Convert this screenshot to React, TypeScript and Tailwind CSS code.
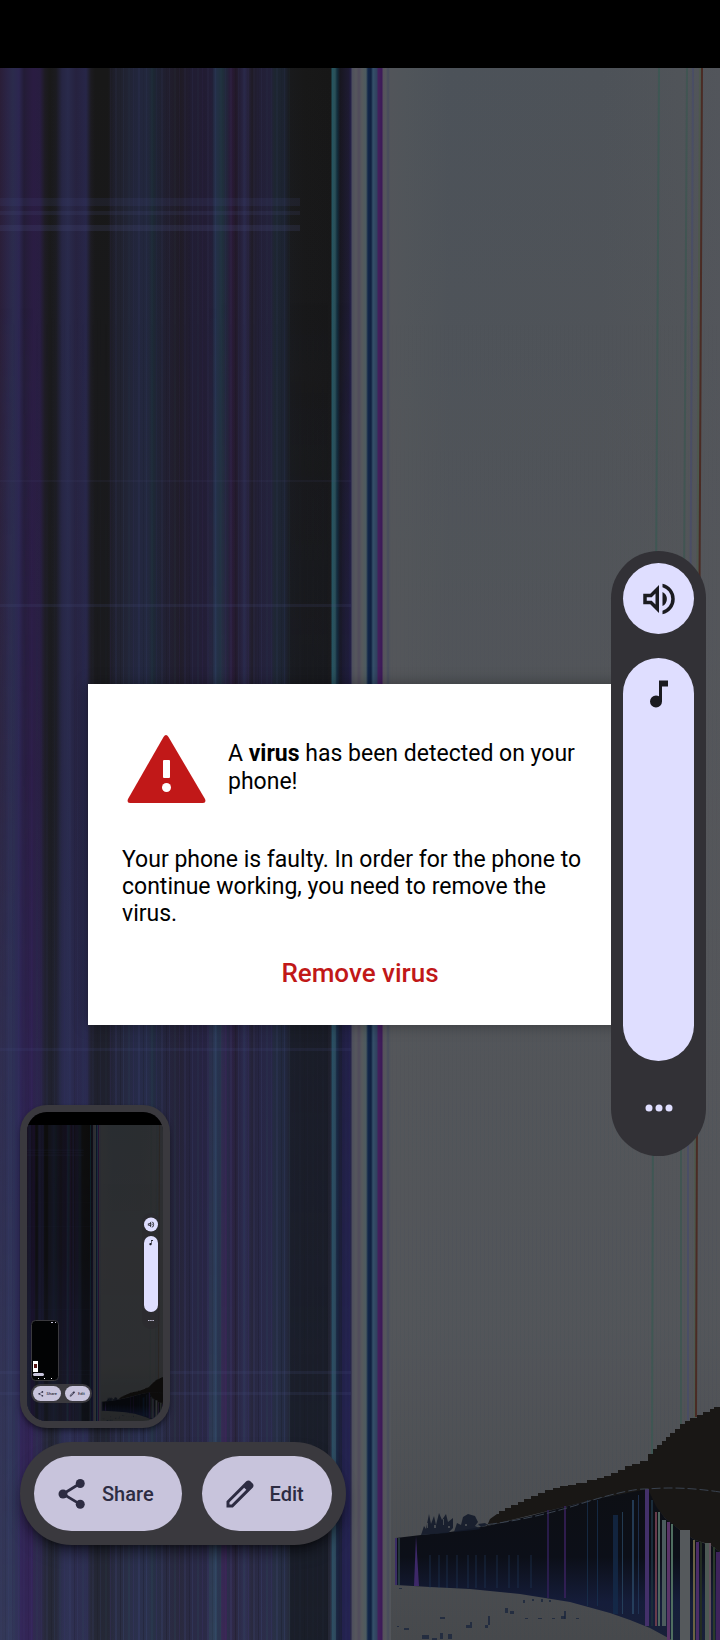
import { useId, useState } from "react";

type Stop = [number, string];

// x position across the 720 wide wallpaper, colour
const stripes: Stop[] = [
  [0, "#2a1e38"], [8, "#2b2547"], [13, "#2b2b4c"], [19, "#2c2650"], [24, "#231c36"],
  [33, "#2a1c42"], [40, "#281d40"], [45, "#1d1b22"], [50, "#191919"], [56, "#1b1b20"],
  [62, "#262543"], [68, "#292a4b"], [76, "#26223f"], [86, "#272648"], [91, "#1c1b20"],
  [95, "#181818"], [108, "#181818"], [113, "#1e1e2a"], [122, "#20222f"], [138, "#22263d"],
  [148, "#22273c"], [153, "#1c2833"], [158, "#1f2233"], [168, "#211e2e"], [180, "#1f1b25"],
  [192, "#211d33"], [205, "#221c33"], [212, "#231f38"], [215, "#25304a"], [222, "#1f303c"],
  [227, "#22253a"], [231, "#2a1a38"], [236, "#221929"], [240, "#241f38"], [245, "#2a2749"],
  [252, "#1f1b26"], [258, "#221f35"], [270, "#23213a"], [275, "#1d2630"], [285, "#1c2230"],
  [290, "#191a1c"], [305, "#181818"], [331, "#171717"], [332, "#245560"], [335, "#2b5058"],
  [337, "#12303f"], [340, "#17161f"], [349, "#1e1b33"], [351, "#25214a"], [352, "#4d4f5c"],
  [356, "#56575d"], [359, "#504c5c"], [362, "#56595c"], [366, "#4c5b60"], [368, "#12264a"],
  [371, "#10203f"], [373, "#35506a"], [377, "#30405e"], [378, "#44205c"], [382, "#3c1a58"],
  [383, "#55505c"], [386, "#54575b"], [388, "#474c5c"], [390, "#52555a"], [405, "#50555a"],
  [450, "#4c5259"], [600, "#4d5258"], [680, "#505459"], [720, "#52555b"],
];

// x, top, width, colour of the burnt lines in the lower right corner
const burnt: [number, number, number, string][] = [
  [547, 1510, 2, "#31205a"], [564, 1506, 2, "#3b2260"], [587, 1500, 1, "#18324f"],
  [597, 1500, 1, "#173252"], [613, 1515, 5, "#142c4c"], [622, 1512, 1, "#2a4a66"],
  [632, 1500, 2, "#2b4a68"], [638, 1495, 1, "#233a5c"], [645, 1489, 4, "#43306a"],
  [651, 1500, 2, "#1a2c3a"], [655, 1512, 2, "#673b4c"], [658, 1512, 2, "#4f6660"],
  [662, 1520, 4, "#4c5c5e"], [667, 1522, 3, "#5b3468"], [671, 1524, 2, "#4f6e60"],
  [680, 1530, 10, "#55595c"], [693, 1540, 2, "#6a6242"], [696, 1542, 3, "#4a2c66"],
  [700, 1542, 2, "#222c22"], [705, 1543, 6, "#4d5954"], [709, 1543, 2, "#62505c"],
  [713, 1547, 2, "#2a3a2a"], [716, 1552, 4, "#3e245c"],
];

const specks: [number, number, number, number][] = [
  [399, 1588, 3, 1], [440, 1617, 5, 2], [404, 1628, 5, 2], [397, 1626, 2, 1],
  [488, 1616, 2, 9], [485, 1625, 3, 3], [505, 1608, 3, 5], [510, 1611, 4, 3],
  [466, 1625, 4, 3], [470, 1622, 2, 6], [422, 1635, 7, 4], [440, 1633, 3, 6],
  [448, 1634, 4, 5], [561, 1616, 4, 3], [564, 1611, 2, 8], [432, 1638, 5, 2],
  [523, 1600, 2, 3], [532, 1599, 2, 2], [541, 1599, 2, 3], [549, 1600, 2, 2],
  [525, 1618, 3, 1], [538, 1618, 4, 1], [552, 1618, 3, 1], [576, 1618, 3, 1],
];

const mound =
  "M487 1526L490 1519L497 1514H499V1511H505V1508H511V1505H518V1502H524V1499H531V1496H538V1493H545V1490H553V1488H560V1486H568V1485H576V1483H587V1480H597V1478H604V1476H611V1473H618V1470H625V1466H632V1464H640V1461H648V1454H653V1449H657V1445H662V1441H666V1437H670V1433H675V1429H680V1424H685V1421H690V1418H697V1415H703V1412H710V1409H714V1407H720V1552L712 1546L705 1543L695 1540L680 1530L672 1524L665 1518L655 1506L648 1490L600 1498L560 1508Z";

function Wallpaper({ className }: { className: string }) {
  const id = useId();

  return (
    <svg
      viewBox="0 68 720 1572"
      preserveAspectRatio="none"
      className={className}
      aria-hidden="true"
    >
      <defs>
        <linearGradient id={`${id}-stripes`} gradientUnits="userSpaceOnUse" x1="0" x2="720" y1="0" y2="0">
          {stripes.map(([x, color]) => (
            <stop key={x} offset={x / 720} stopColor={color} />
          ))}
        </linearGradient>
        <linearGradient id={`${id}-glow`} x1="0" x2="0" y1="0" y2="1">
          <stop offset="0" stopColor="#343a70" stopOpacity="0" />
          <stop offset="0.45" stopColor="#343a70" stopOpacity="0.08" />
          <stop offset="0.65" stopColor="#343a70" stopOpacity="0.25" />
          <stop offset="1" stopColor="#3a4268" stopOpacity="0.38" />
        </linearGradient>
        <linearGradient id={`${id}-warm`} x1="0" x2="0" y1="0" y2="1">
          <stop offset="0" stopColor="#56575a" stopOpacity="0" />
          <stop offset="0.5" stopColor="#56575a" stopOpacity="0.7" />
          <stop offset="0.8" stopColor="#54565a" stopOpacity="0.8" />
          <stop offset="1" stopColor="#47494c" stopOpacity="1" />
        </linearGradient>
        <linearGradient id={`${id}-blue`} x1="0" x2="0" y1="0" y2="1">
          <stop offset="0" stopColor="#0d0f14" />
          <stop offset="0.45" stopColor="#0c0f18" />
          <stop offset="0.75" stopColor="#151d3a" />
          <stop offset="1" stopColor="#182038" />
        </linearGradient>
        <linearGradient id={`${id}-fade`} x1="0" x2="0" y1="0" y2="1">
          <stop offset="0" stopColor="white" stopOpacity="0" />
          <stop offset="1" stopColor="white" stopOpacity="1" />
        </linearGradient>
        <mask id={`${id}-lower`}>
          <rect x="0" y="300" width="720" height="1340" fill={`url(#${id}-fade)`} />
        </mask>
        <pattern id={`${id}-scan`} width="23" height="20" patternUnits="userSpaceOnUse">
          <rect x="0" width="2" height="20" fill="#4a5390" opacity="0.12" />
          <rect x="5" width="1" height="20" fill="#101018" opacity="0.16" />
          <rect x="8" width="1" height="20" fill="#4a5390" opacity="0.14" />
          <rect x="13" width="2" height="20" fill="#2f5560" opacity="0.1" />
          <rect x="18" width="1" height="20" fill="#4a3a80" opacity="0.14" />
        </pattern>
        <pattern id={`${id}-grid`} width="4" height="8" patternUnits="userSpaceOnUse">
          <rect width="1" height="8" fill="#3c4c58" opacity="0.12" />
        </pattern>
      </defs>

      <rect y="68" width="720" height="1572" fill={`url(#${id}-stripes)`} />
      <rect y="68" width="351" height="1572" fill={`url(#${id}-glow)`} />
      <rect x="391" y="68" width="329" height="1572" fill={`url(#${id}-warm)`} />
      <rect x="110" y="68" width="180" height="1572" fill={`url(#${id}-scan)`} opacity="0.6" />

      <g mask={`url(#${id}-lower)`}>
        <rect y="300" width="351" height="1340" fill={`url(#${id}-scan)`} />
        <rect x="391" y="300" width="329" height="1340" fill={`url(#${id}-grid)`} />
        <rect x="0" y="300" width="12" height="1340" fill="#3a4a6a" opacity="0.35" />
        <rect x="20" y="300" width="13" height="1340" fill="#3c1e66" opacity="0.4" />
        <rect x="209" y="300" width="8" height="1340" fill="#35586a" opacity="0.4" />
        <rect x="221" y="300" width="6" height="1340" fill="#481c5c" opacity="0.5" />
        <rect x="290" y="300" width="38" height="1340" fill="#121820" opacity="0.6" />
        <rect x="336" y="300" width="6" height="1340" fill="#161a38" opacity="0.6" />
        <rect x="342" y="300" width="8" height="1340" fill="#221e58" opacity="0.6" />
      </g>

      {/* horizontal tears */}
      <g fill="#4a4f84">
        <rect y="198" width="300" height="8" opacity="0.14" />
        <rect y="211" width="300" height="4" opacity="0.16" />
        <rect y="225" width="300" height="6" opacity="0.2" />
        <rect y="480" width="351" height="2" opacity="0.1" />
        <rect y="604" width="351" height="3" opacity="0.16" />
        <rect y="1048" width="351" height="3" opacity="0.14" />
        <rect y="1371" width="351" height="3" opacity="0.16" />
        <rect y="1392" width="351" height="3" opacity="0.16" />
      </g>

      <g fill="none" strokeWidth="2">
        <path d="M659 68L653 1110L652 1455" stroke="#3b5853" opacity="0.8" />
        <path d="M687 68L681 1110V1425" stroke="#3b5550" opacity="0.7" />
        <path d="M693 68L688 1110V1420" stroke="#484c68" opacity="0.8" />
        <path d="M700 68L695 1110V1418" stroke="#4c5a48" opacity="0.7" />
        <path d="M702 68L697 1110L696 1417" stroke="#4a2b24" />
      </g>

      <path d={mound} fill="#191715" />
      <path
        d="M396 1538L421 1535L450 1532L487 1526L530 1516L560 1508L600 1498L648 1489L656 1506L665 1518L680 1530L695 1540L712 1546L720 1552V1640H672L650 1628L630 1620L610 1613L570 1602L520 1594L470 1589L430 1587L396 1585Z"
        fill={`url(#${id}-blue)`}
      />
      {burnt.map(([x, y, width, color]) => (
        <rect
          key={x}
          x={x}
          y={y}
          width={width}
          height={(x < 570 ? 1598 : x < 600 ? 1606 : x < 640 ? 1614 : x < 666 ? 1626 : 1640) - y}
          fill={color}
          opacity={x < 640 ? 0.75 : 1}
        />
      ))}
      <path d="M396 1538V1585" stroke="#3b2d66" strokeWidth="2" />
      <path d="M399 1538V1585" stroke="#3d5c58" strokeWidth="1" />
      <path d="M416 1536L414 1586H419Z" fill="#3d2868" />
      {[430, 439, 447, 457, 468, 476, 485, 497, 509, 518, 531].map((x) => (
        <path key={x} d={`M${x} 1555V1588`} stroke="#203a5c" opacity="0.6" />
      ))}
      <path
        d="M476 1526Q530 1520 580 1504T648 1489Q680 1486 720 1492"
        fill="none"
        stroke="#3a4350"
        strokeWidth="1"
        strokeDasharray="9 3"
      />
      {/* shrubs on the left slope */}
      <g fill="#141b2b" opacity="0.9">
        <path d="M421 1535l3-9 2 3 3-15 2 10 3-8 2 9 3-12 3 7 4-6 2 8 5-4v10l-5 5Z" />
        <path d="M454 1532l3-9 4 2 2-8 5-3 7 2 3 6-3 4 6 3-7 1Z" />
        <path d="M478 1524l7-1 3 2-7 2Z" />
      </g>
      <g fill="#505458" opacity="0.8">
        <path d="M427 1523h1v5h-1zM434 1525h2v3h-2zM443 1519h1v6h-1zM448 1526h2v2h-2zM465 1524h2v2h-2z" />
      </g>
      {specks.map(([x, y, width, height]) => (
        <rect key={`${x}-${y}`} x={x} y={y} width={width} height={height} fill="#18243c" opacity="0.75" />
      ))}
    </svg>
  );
}

const volumePath =
  "M14 20.725v-2.05q2.25-.65 3.625-2.5t1.375-4.2-1.375-4.2T14 5.275v-2.05q3.1.7 5.05 3.138T21 11.975t-1.95 5.613T14 20.725M3 15V9h4l5-5v16l-5-5zm11 1V7.95q1.175.55 1.838 1.65T16.5 12q0 1.275-.663 2.363T14 16m-4-7.15L7.85 11H5v2h2.85L10 15.15z";
const notePath =
  "M10 21q-1.65 0-2.825-1.175T6 17t1.175-2.825T10 13q.575 0 1.063.138t.937.412V3h6v4h-4v10q0 1.65-1.175 2.825T10 21";
const editPath =
  "M5 19h1.425L16.2 9.225 14.775 7.8 5 17.575V19Zm-2 2v-4.25L16.2 3.575q.3-.275.663-.425t.762-.15.775.15.65.45L20.425 5q.3.275.438.65T21 6.4q0 .4-.137.763t-.438.662L7.25 21H3Z";

function ShareGlyph() {
  return (
    <>
      <path d="M17.3 5L6 12l11.3 6.8" fill="none" stroke="currentColor" strokeWidth="1.8" />
      <circle cx="17.5" cy="5" r="3" />
      <circle cx="6" cy="12" r="3" />
      <circle cx="17.5" cy="18.8" r="3" />
    </>
  );
}

// Small copy of the screen shown inside the screenshot preview
function Preview() {
  return (
    <div className="relative h-[309px] overflow-hidden rounded-[20px] bg-black pt-[13px]">
      <Wallpaper className="block h-full w-full" />
      <div className="absolute inset-0 bg-black/45" />
      <svg viewBox="0 0 136 309" className="absolute inset-0 h-full w-full" aria-hidden="true">
        <rect x="115" y="101" width="18" height="116" rx="9" fill="#2b2a2f" opacity="0.6" />
        <circle cx="124" cy="112.500" r="7" fill="#dfdeff" />
        <path d={volumePath} transform="translate(119.800 108.300) scale(.35)" fill="#1a1a20" />
        <rect x="117" y="124" width="14" height="76" rx="7" fill="#dfdeff" />
        <path d={notePath} transform="translate(120.500 127) scale(.3)" fill="#1a1a20" />
        <path d="M121 208.500h6" stroke="#c8c4dc" strokeDasharray="1.500 .7" />
        <rect x="4.500" y="208.500" width="27" height="60" rx="4" fill="#020304" stroke="#3a393e" />
        <path d="M24 210.500h2m2 0h1" stroke="#c8c4dc" />
        <rect x="6" y="249" width="5" height="11" fill="#ffffff" />
        <rect x="7" y="252" width="3" height="4" fill="#571414" />
        <rect x="6" y="261" width="11" height="3" rx="1.500" fill="#c8c4dc" />
        <path d="M11 266.500h1m5 0h1m6 0h1" stroke="#ffffff" />
        <rect x="4" y="272" width="61" height="19" rx="9.500" fill="#3a393e" />
        <rect x="6" y="274" width="28" height="15" rx="7.500" fill="#c8c4dc" />
        <rect x="38" y="274" width="25" height="15" rx="7.500" fill="#c8c4dc" />
        <g transform="translate(10.500 278.500) scale(.28)" fill="#2d2c42" color="#2d2c42">
          <ShareGlyph />
        </g>
        <path d={editPath} transform="translate(42 278.500) scale(.28)" fill="#2d2c42" />
        <g fill="#2d2c42" fontFamily="Roboto, sans-serif" fontWeight="500" fontSize="4">
          <text x="19.500" y="283">Share</text>
          <text x="51" y="283">Edit</text>
        </g>
      </svg>
    </div>
  );
}

function VolumePanel() {
  const [volume, setVolume] = useState(100);

  return (
    <aside className="absolute top-[551px] right-3.5 flex w-[95px] flex-col items-center gap-6 rounded-full bg-[#323136] px-3 pt-3 pb-8">
      <button
        type="button"
        aria-label="Ringer volume"
        className="flex h-[71px] w-[71px] items-center justify-center rounded-full bg-[#dfdeff] text-[#1b1b20]"
      >
        <svg viewBox="0 0 24 24" className="h-[42px] w-[42px]" fill="currentColor">
          <path d={volumePath} />
        </svg>
      </button>
      <div className="relative h-[403px] w-[71px]">
        <input
          type="range"
          aria-label="Media volume"
          min={0}
          max={100}
          value={volume}
          onChange={(e) => setVolume(Number(e.target.value))}
          className="block h-full w-full cursor-pointer appearance-none rounded-full bg-[#dfdeff] [direction:rtl] [writing-mode:vertical-lr] [&::-webkit-slider-thumb]:appearance-none [&::-webkit-slider-thumb]:opacity-0"
        />
        <svg
          viewBox="0 0 24 24"
          className="pointer-events-none absolute inset-x-0 top-[18px] mx-auto h-9 w-9 text-[#1b1b20]"
          fill="currentColor"
        >
          <path d={notePath} />
        </svg>
      </div>
      <button
        type="button"
        aria-label="More sound settings"
        className="flex h-[39px] w-full items-end justify-center pb-3 text-[#dfdeff]"
      >
        <svg viewBox="0 0 28 8" className="h-2 w-7" fill="currentColor">
          <circle cx="4" cy="4" r="3.500" />
          <circle cx="14" cy="4" r="3.500" />
          <circle cx="24" cy="4" r="3.500" />
        </svg>
      </button>
    </aside>
  );
}

function ScreenshotTray() {
  return (
    <section
      aria-label="Screenshot"
      className="absolute bottom-[95px] left-5 flex flex-col items-start gap-3.5"
    >
      <div className="w-[150px] rounded-[27px] bg-[#3a393e] p-[7px] shadow-md shadow-black/40">
        <Preview />
      </div>
      <div className="flex gap-5 rounded-full bg-[#3a393e] p-3.5 text-xl font-medium text-[#2d2c42] shadow-lg shadow-black/50">
        <button
          type="button"
          className="flex h-[75px] items-center gap-3 rounded-full bg-[#c8c4dc] pr-7 pl-5"
        >
          <svg viewBox="0 0 24 24" className="h-9 w-9" fill="currentColor">
            <ShareGlyph />
          </svg>
          Share
        </button>
        <button
          type="button"
          className="flex h-[75px] items-center gap-3 rounded-full bg-[#c8c4dc] pr-7 pl-5"
        >
          <svg viewBox="0 0 24 24" className="h-9 w-9" fill="currentColor">
            <path d={editPath} />
          </svg>
          Edit
        </button>
      </div>
    </section>
  );
}

export default function App() {
  return (
    <main className="relative flex min-h-screen flex-col bg-black font-[Roboto,sans-serif] text-black">
      <header className="h-[68px] shrink-0" />

      <div className="relative flex flex-1 items-center justify-center px-[88px]">
        <Wallpaper className="absolute inset-0 h-full w-full" />
        <div
          role="alertdialog"
          aria-labelledby="alert-title"
          aria-describedby="alert-text"
          className="relative w-full max-w-[544px] bg-white px-[34px] pt-12 pb-[30px] shadow-[0_0_14px_rgba(0,0,0,0.35)]"
        >
          <div className="flex items-start">
            <svg viewBox="0 0 80 72" className="ml-1 h-[72px] w-20 shrink-0" aria-hidden="true">
              <path
                d="M37.500 5Q40 1 42.500 5L79 67Q80.500 71 77 71H4Q.5 71 2 67Z"
                fill="#c11818"
              />
              <rect x="37" y="28" width="7" height="18" rx="1" fill="#ffffff" />
              <circle cx="40.500" cy="55.500" r="4.500" fill="#ffffff" />
            </svg>
            <h1 id="alert-title" className="ml-[22px] pt-2 text-[23px] leading-7">
              A <b>virus</b> has been detected on your phone!
            </h1>
          </div>
          <p id="alert-text" className="mt-[42px] text-[23px] leading-[27px]">
            Your phone is faulty. In order for the phone to continue working, you need to remove the
            virus.
          </p>
          <div className="mt-6 flex justify-center">
            <button type="button" className="px-4 py-1 text-[26px] leading-9 font-medium text-[#c11818]">
              Remove virus
            </button>
          </div>
        </div>
      </div>

      <VolumePanel />
      <ScreenshotTray />
    </main>
  );
}
